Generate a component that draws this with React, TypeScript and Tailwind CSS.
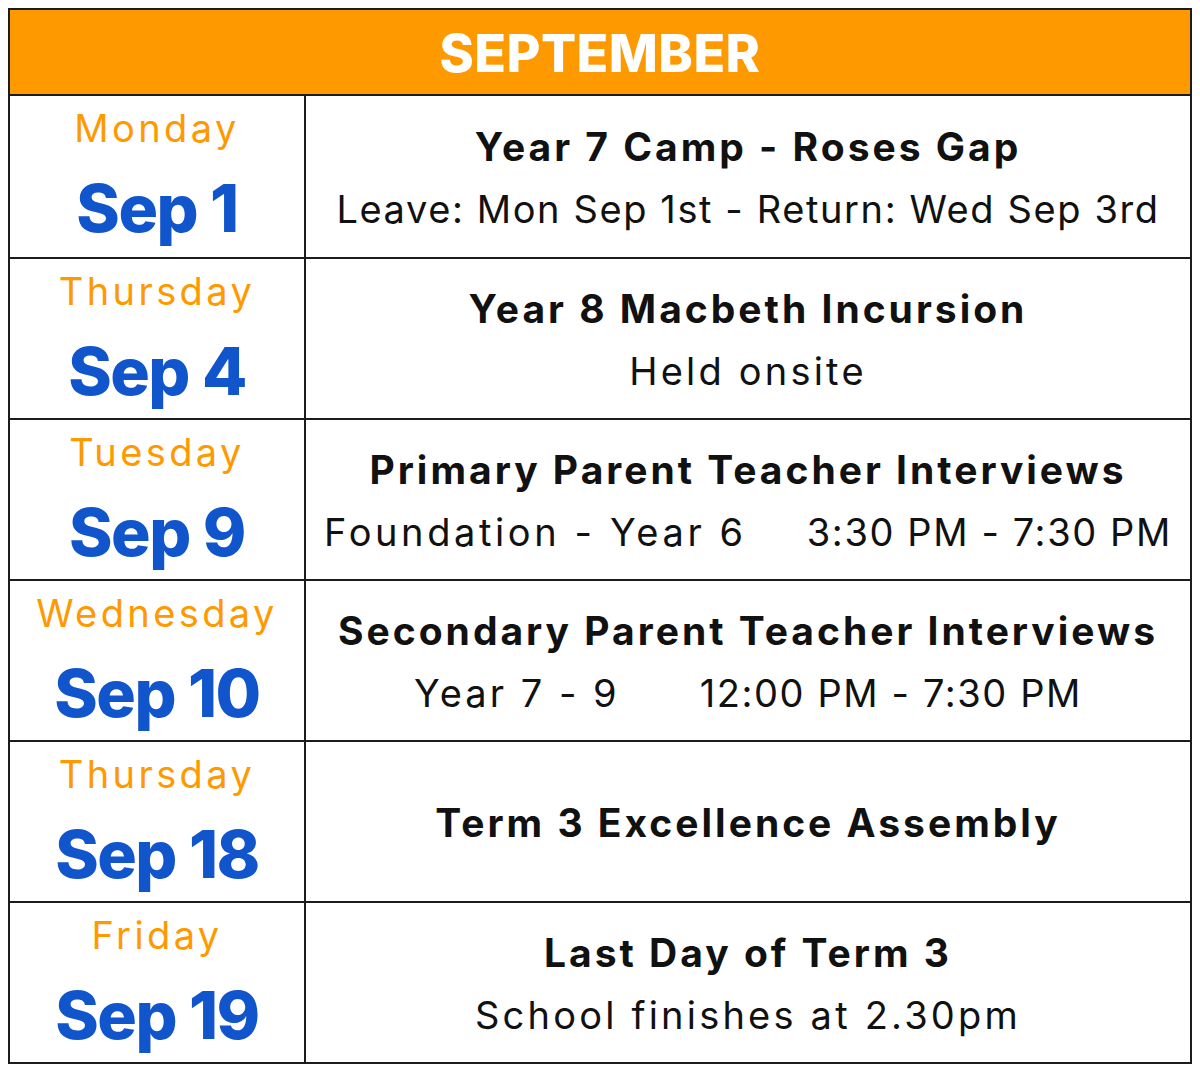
import React from "react";

type Sub = { text: string; track: string };
type Row = { day: string; date: string; title: string; sub: Sub[]; gap?: string };

const rows: Row[] = [
  { day: "Monday", date: "Sep 1", title: "Year 7 Camp - Roses Gap", sub: [{ text: "Leave: Mon Sep 1st - Return: Wed Sep 3rd", track: "tracking-[1.6px]" }] },
  { day: "Thursday", date: "Sep 4", title: "Year 8 Macbeth Incursion", sub: [{ text: "Held onsite", track: "tracking-[3.2px]" }] },
  {
    day: "Tuesday",
    date: "Sep 9",
    title: "Primary Parent Teacher Interviews",
    sub: [
      { text: "Foundation - Year 6", track: "tracking-[3.6px]" },
      { text: "3:30 PM - 7:30 PM", track: "tracking-[1.6px]" },
    ],
    gap: "gap-[60px]",
  },
  {
    day: "Wednesday",
    date: "Sep 10",
    title: "Secondary Parent Teacher Interviews",
    sub: [
      { text: "Year 7 - 9", track: "tracking-[3px]" },
      { text: "12:00 PM - 7:30 PM", track: "tracking-[1.6px]" },
    ],
    gap: "gap-[80px]",
  },
  { day: "Thursday", date: "Sep 18", title: "Term 3 Excellence Assembly", sub: [] },
  { day: "Friday", date: "Sep 19", title: "Last Day of Term 3", sub: [{ text: "School finishes at 2.30pm", track: "tracking-[3.2px]" }] },
];

export default function App() {
  return (
    <div className="bg-white w-[1200px] h-[1071px] pl-[8px] pt-[8px]" style={{ fontFamily: "Inter, 'Noto Sans', sans-serif" }}>
      <div className="w-[1184px] border-2 border-[#1c1c1c]">
        <div className="h-[86px] bg-[#ff9900] flex items-center justify-center border-b-2 border-[#1c1c1c] pt-[3px]">
          <span className="text-white font-extrabold text-[52px] leading-[60px] tracking-[0.5px]">SEPTEMBER</span>
        </div>
        {rows.map((r, i) => (
          <div key={i} className={`grid grid-cols-[296px_1fr] h-[161px] ${i > 0 ? "border-t-2 border-[#1c1c1c]" : ""}`}>
            <div className="border-r-2 border-[#1c1c1c] flex flex-col items-center pt-[6px]">
              <div className="text-[#ff9900] text-[38px] leading-[52px] tracking-[3.4px]">{r.day}</div>
              <div className="text-[#1155cc] font-extrabold text-[66px] leading-[80px] tracking-[-1.5px] mt-[14px]">{r.date}</div>
            </div>
            <div className="flex flex-col items-center justify-center text-[#111]">
              <div className="font-bold text-[39px] leading-[62px] tracking-[3px] mt-[2px]">{r.title}</div>
              {r.sub.length === 1 && <div className={`text-[38px] leading-[62px] ${r.sub[0].track}`}>{r.sub[0].text}</div>}
              {r.sub.length === 2 && (
                <div className={`text-[38px] leading-[62px] flex ${r.gap}`}>
                  <span className={r.sub[0].track}>{r.sub[0].text}</span>
                  <span className={r.sub[1].track}>{r.sub[1].text}</span>
                </div>
              )}
            </div>
          </div>
        ))}
      </div>
    </div>
  );
}
